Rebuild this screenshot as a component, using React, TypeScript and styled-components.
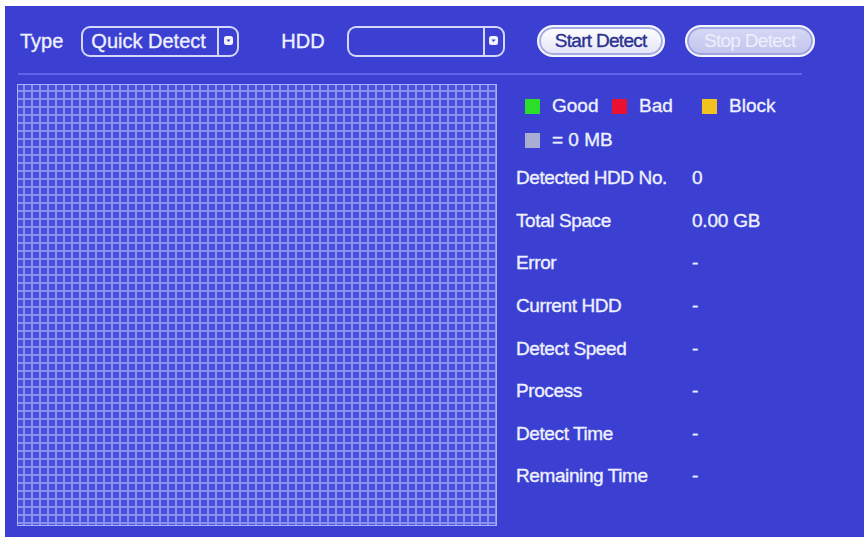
import styled, { createGlobalStyle } from 'styled-components';

const GlobalStyle = createGlobalStyle`
  html, body {
    margin: 0;
    padding: 0;
    background: #ffffff;
  }
  body {
    font-family: 'Liberation Sans', Arial, sans-serif;
  }
`;

const legend = [
  { color: '#2ade2a', label: 'Good', width: 87 },
  { color: '#ea1230', label: 'Bad', width: 90 },
  { color: '#f2c21e', label: 'Block', width: 90 },
];

const info = [
  ['Detected HDD No.', '0'],
  ['Total Space', '0.00 GB'],
  ['Error', '-'],
  ['Current HDD', '-'],
  ['Detect Speed', '-'],
  ['Process', '-'],
  ['Detect Time', '-'],
  ['Remaining Time', '-'],
];

function DropArrow() {
  return (
    <svg width="9" height="9" viewBox="0 0 9 9">
      <rect x="0" y="0" width="9" height="9" rx="2.5" fill="#f2f3ff" />
      <path d="M2.4 3.4 L6.6 3.4 L4.5 6 Z" fill="#3b40d2" />
    </svg>
  );
}

export default function App() {
  return (
    <>
      <GlobalStyle />
      <Panel>
        <Toolbar>
          <Label $ml={3}>Type</Label>
          <Select $w={158} $ml={18}>
            <SelectValue>Quick Detect</SelectValue>
            <SelectButton>
              <DropArrow />
            </SelectButton>
          </Select>
          <Label $ml={42}>HDD</Label>
          <Select $w={158} $ml={22}>
            <SelectValue />
            <SelectButton>
              <DropArrow />
            </SelectButton>
          </Select>
          <Button $ml={32} $w={128}>Start Detect</Button>
          <Button $ml={20} $w={130} disabled>
            Stop Detect
          </Button>
        </Toolbar>
        <Separator />
        <Body>
          <Grid />
          <Side>
            <LegendRow>
              {legend.map(item => (
                <LegendItem key={item.label} $w={item.width}>
                  <Swatch $color={item.color} />
                  {item.label}
                </LegendItem>
              ))}
            </LegendRow>
            <LegendRow>
              <LegendItem $w={120}>
                <Swatch $color="#a9add2" />= 0 MB
              </LegendItem>
            </LegendRow>
            {info.map(([name, value]) => (
              <InfoRow key={name}>
                <InfoName>{name}</InfoName>
                <InfoValue>{value}</InfoValue>
              </InfoRow>
            ))}
          </Side>
        </Body>
      </Panel>
    </>
  );
}

const Panel = styled.div`
  margin: 6px 4px 0 5px;
  height: 531px;
  box-sizing: border-box;
  padding: 19px 0 0 12px;
  background: #3b40d2;
  color: #eef0ff;
  overflow: hidden;
  font-size: 19px;
  -webkit-text-stroke: 0.35px #eef0ff;
`;

const Toolbar = styled.div`
  display: flex;
  align-items: center;
  height: 32px;
  font-size: 20px;
`;

const Label = styled.span<{ $ml?: number }>`
  margin-left: ${p => p.$ml ?? 0}px;
`;

const Select = styled.div<{ $w: number; $ml: number }>`
  display: flex;
  align-items: stretch;
  box-sizing: border-box;
  width: ${p => p.$w}px;
  height: 31px;
  margin-left: ${p => p.$ml}px;
  border: 2px solid #d4d7fa;
  border-radius: 9px;
`;

const SelectValue = styled.div`
  flex: 1;
  display: flex;
  align-items: center;
  padding-left: 8px;
`;

const SelectButton = styled.div`
  display: flex;
  align-items: center;
  justify-content: center;
  width: 18px;
  border-left: 2px solid #d4d7fa;
  padding-bottom: 1px;
`;

const Button = styled.button<{ $ml: number; $w: number }>`
  box-sizing: border-box;
  width: ${p => p.$w}px;
  height: 32px;
  margin-left: ${p => p.$ml}px;
  padding: 0;
  border: 2px solid #f4f5ff;
  border-radius: 16px;
  box-shadow: inset 0 0 0 2px #a7abe4;
  background: linear-gradient(#ffffff, #e2e4f6);
  font-family: 'Liberation Sans', Arial, sans-serif;
  font-size: 19px;
  letter-spacing: -0.7px;
  color: #2b3090;
  -webkit-text-stroke: 0.35px #2b3090;

  &:disabled {
    background: linear-gradient(#d6d8f5, #c2c5ee);
    box-shadow: inset 0 0 0 2px #9ea3e2;
    color: #eef0fb;
    -webkit-text-stroke: 0;
  }
`;

const Separator = styled.div`
  width: 784px;
  height: 2px;
  margin: 16px 0 0 1px;
  background: #5e64e6;
`;

const Body = styled.div`
  display: flex;
  margin-top: 9px;
`;

const Grid = styled.div`
  box-sizing: border-box;
  width: 480px;
  height: 442px;
  border: 1px solid #aab0f8;
  background-color: #4850de;
  background-image: linear-gradient(to right, #8a90f0 2px, transparent 2px),
    linear-gradient(to bottom, #8a90f0 2px, transparent 2px);
  background-size: 8px 8px;
  background-position: 5px 5px;
`;

const Side = styled.div`
  display: flex;
  flex-direction: column;
  margin-left: 19px;
  padding-top: 5px;
`;

const LegendRow = styled.div`
  display: flex;
  align-items: center;
  height: 34px;
  padding-left: 9px;
`;

const LegendItem = styled.div<{ $w: number }>`
  display: flex;
  align-items: center;
  width: ${p => p.$w}px;
`;

const Swatch = styled.span<{ $color: string }>`
  width: 15px;
  height: 15px;
  margin-right: 12px;
  background: ${p => p.$color};
  -webkit-text-stroke: 0;
`;

const InfoRow = styled.div`
  display: flex;
  align-items: center;
  height: 42.6px;
`;

const InfoName = styled.span`
  width: 176px;
  letter-spacing: -0.4px;
`;

const InfoValue = styled.span`
  letter-spacing: -0.2px;
`;
